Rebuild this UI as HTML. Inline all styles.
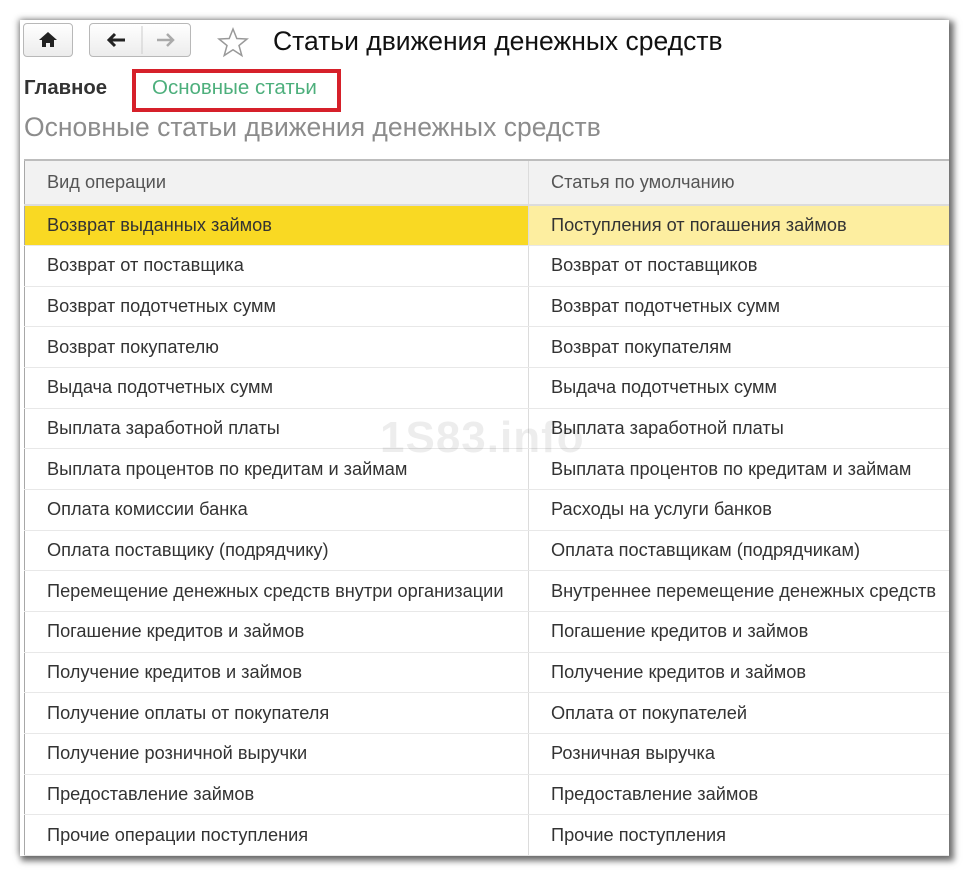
<!DOCTYPE html>
<html><head><meta charset="utf-8"><style>
html,body{margin:0;padding:0;background:#fff;width:969px;height:876px;overflow:hidden;font-family:"Liberation Sans",Arial,sans-serif}
.panel{position:absolute;left:20px;top:20px;width:929px;height:836px;background:#fff;box-shadow:3px 3px 6px 2px rgba(0,0,0,.55),-2px -1px 6px rgba(0,0,0,.25);overflow:hidden}
.btn{position:absolute;top:3px;height:34px;border:1px solid #b8b8b8;border-radius:4px;background:linear-gradient(#fff,#ececec);box-sizing:border-box}
.title{position:absolute;left:253px;top:6px;font-size:26.5px;color:#111}
.tabs{position:absolute;top:56px;font-size:20.5px}
.red{position:absolute;left:112px;top:49px;width:209px;height:43px;border:4px solid #d6202a;box-sizing:border-box}
.sub{position:absolute;left:4px;top:92px;font-size:26.5px;color:#8c8c8c}
table{position:absolute;left:4px;top:139px;width:925px;border-collapse:collapse;font-size:18.2px;color:#333;border-left:1px solid #a8a8a8}
td{height:40.67px;padding:0 0 0 22px;border-bottom:1px solid #e8e8e8;box-sizing:border-box;white-space:nowrap}
td:first-child{width:504px;border-right:1px solid #dcdcdc}
tr.h td{background:#f2f2f2;border-top:2px solid #bdbdbd;border-bottom:2px solid #dcdcdc;color:#555;height:45px}
tr.s td:first-child{background:#f9d923}
tr.s td:last-child{background:#fdeea0}
.wm{position:absolute;left:360px;top:393px;font-size:44px;font-weight:bold;color:rgba(0,0,0,.07);letter-spacing:1px}
</style></head><body>
<div class="panel">
<div class="btn" style="left:3px;width:50px"><svg width="48" height="32" viewBox="0 0 48 32"><path d="M24 8 L15 16 H18 V23 H22 V19 H26 V23 H30 V16 H33 Z" fill="#222"/></svg></div>
<div class="btn" style="left:69px;width:102px"><svg width="100" height="32" viewBox="0 0 100 32"><path d="M19 16 H35 M25 10 L19 16 L25 22" stroke="#222" stroke-width="3" fill="none"/><line x1="52" y1="2" x2="52" y2="30" stroke="#ccc"/><path d="M67 16 H83 M77 10 L83 16 L77 22" stroke="#aaa" stroke-width="2.5" fill="none"/></svg></div>
<svg style="position:absolute;left:196px;top:6px" width="34" height="32" viewBox="0 0 34 32"><path d="M17 3 L20.8 12.5 L31 13 L23 19.5 L25.8 29.5 L17 23.8 L8.2 29.5 L11 19.5 L3 13 L13.2 12.5 Z" fill="none" stroke="#999" stroke-width="1.5"/></svg>
<div class="title">Статьи движения денежных средств</div>
<div class="tabs" style="left:4px;font-weight:bold;color:#333;font-size:20.3px;top:57px">Главное</div>
<div class="tabs" style="left:132px;color:#4daf7c">Основные статьи</div>
<div class="red"></div>
<div class="sub">Основные статьи движения денежных средств</div>
<table>
<tr class="h"><td>Вид операции</td><td>Статья по умолчанию</td></tr>
<tr class="s"><td>Возврат выданных займов</td><td>Поступления от погашения займов</td></tr>
<tr><td>Возврат от поставщика</td><td>Возврат от поставщиков</td></tr>
<tr><td>Возврат подотчетных сумм</td><td>Возврат подотчетных сумм</td></tr>
<tr><td>Возврат покупателю</td><td>Возврат покупателям</td></tr>
<tr><td>Выдача подотчетных сумм</td><td>Выдача подотчетных сумм</td></tr>
<tr><td>Выплата заработной платы</td><td>Выплата заработной платы</td></tr>
<tr><td>Выплата процентов по кредитам и займам</td><td>Выплата процентов по кредитам и займам</td></tr>
<tr><td>Оплата комиссии банка</td><td>Расходы на услуги банков</td></tr>
<tr><td>Оплата поставщику (подрядчику)</td><td>Оплата поставщикам (подрядчикам)</td></tr>
<tr><td>Перемещение денежных средств внутри организации</td><td>Внутреннее перемещение денежных средств</td></tr>
<tr><td>Погашение кредитов и займов</td><td>Погашение кредитов и займов</td></tr>
<tr><td>Получение кредитов и займов</td><td>Получение кредитов и займов</td></tr>
<tr><td>Получение оплаты от покупателя</td><td>Оплата от покупателей</td></tr>
<tr><td>Получение розничной выручки</td><td>Розничная выручка</td></tr>
<tr><td>Предоставление займов</td><td>Предоставление займов</td></tr>
<tr><td>Прочие операции поступления</td><td>Прочие поступления</td></tr>
</table>
<div class="wm">1S83.info</div>
</div>
</body></html>
